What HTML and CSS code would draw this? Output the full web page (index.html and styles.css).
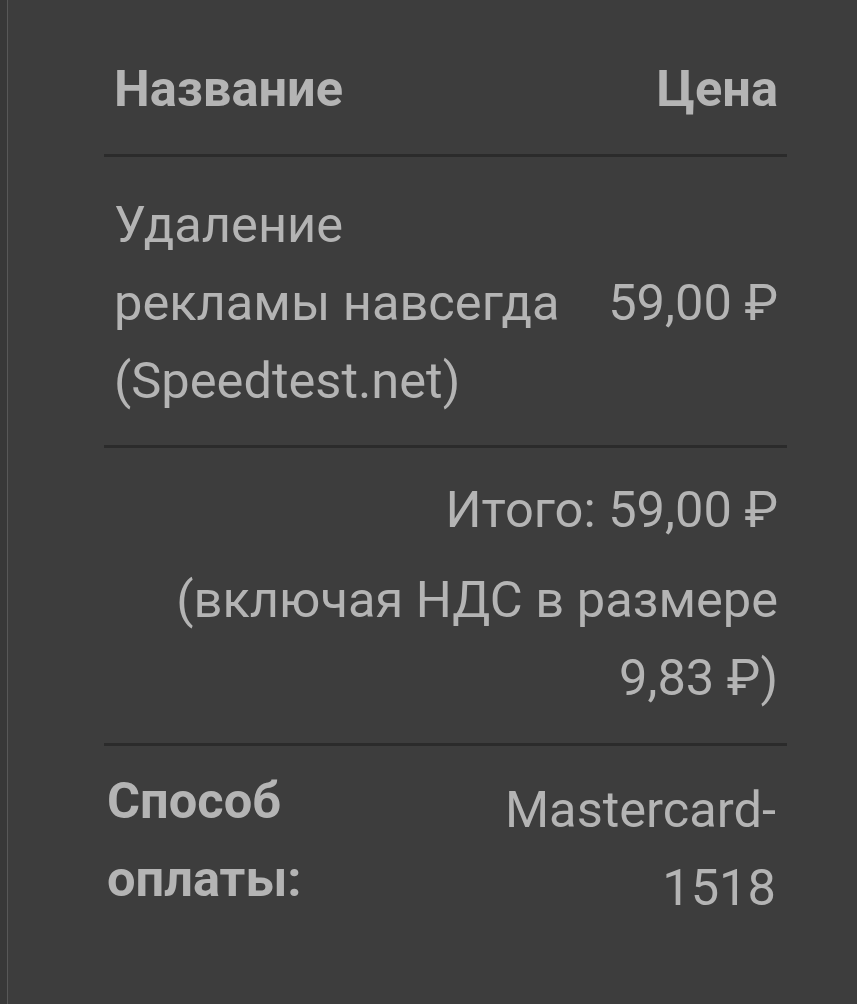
FILE: index.html
```html
<!DOCTYPE html>
<html lang="ru">
<head>
<meta charset="utf-8">
<link rel="stylesheet" href="styles.css">
</head>
<body>
<div class="frame">
  <div class="page">
    <div class="receipt">
      <div class="row head">
        <div class="cell name">Название</div>
        <div class="cell price">Цена</div>
      </div>
      <div class="row item">
        <div class="cell name">Удаление рекламы навсегда (Speedtest.net)</div>
        <div class="cell price">59,00 ₽</div>
      </div>
      <div class="total">
        <p class="sum">Итого: 59,00 ₽</p>
        <p class="vat">(включая НДС в размере 9,83 ₽)</p>
      </div>
      <div class="payment">
        <div class="label">Способ оплаты:</div>
        <div class="value">Mastercard-1518</div>
      </div>
    </div>
  </div>
</div>
</body>
</html>
```
FILE: styles.css
```css
html, body {
  margin: 0;
  padding: 0;
  background: #3d3d3d;
}
body {
  font-family: Roboto, "Noto Sans", sans-serif;
  color: #b4b4b4;
  font-size: 50.6px;
  line-height: 78px;
}
.frame {
  border-left: 7px solid #383838;
  min-height: 1004px;
  box-sizing: border-box;
}
.page {
  border-left: 1px solid #585858;
  min-height: 1004px;
  box-sizing: border-box;
  padding: 50px 70px 0 96px;
}
.receipt {
  width: 683px;
}
.row {
  display: grid;
  grid-template-columns: 460px 1fr;
  border-bottom: 3px solid #2b2b2b;
}
.cell.name {
  padding-left: 10px;
}
.cell.price {
  text-align: right;
  padding-right: 9px;
}
.head {
  font-weight: 700;
  padding-bottom: 26px;
}
.item {
  padding: 29px 0 25px;
  align-items: center;
}
.total {
  text-align: right;
  padding: 23px 9px 26px 10px;
  border-bottom: 3px solid #2b2b2b;
}
.total p {
  margin: 0;
}
.sum {
  margin-bottom: 12px !important;
}
.payment {
  display: grid;
  grid-template-columns: 1fr 1fr;
  padding-top: 16px;
}
.label {
  font-weight: 700;
  padding-left: 3px;
}
.value {
  text-align: right;
  padding-top: 9px;
  padding-right: 11px;
}
```
